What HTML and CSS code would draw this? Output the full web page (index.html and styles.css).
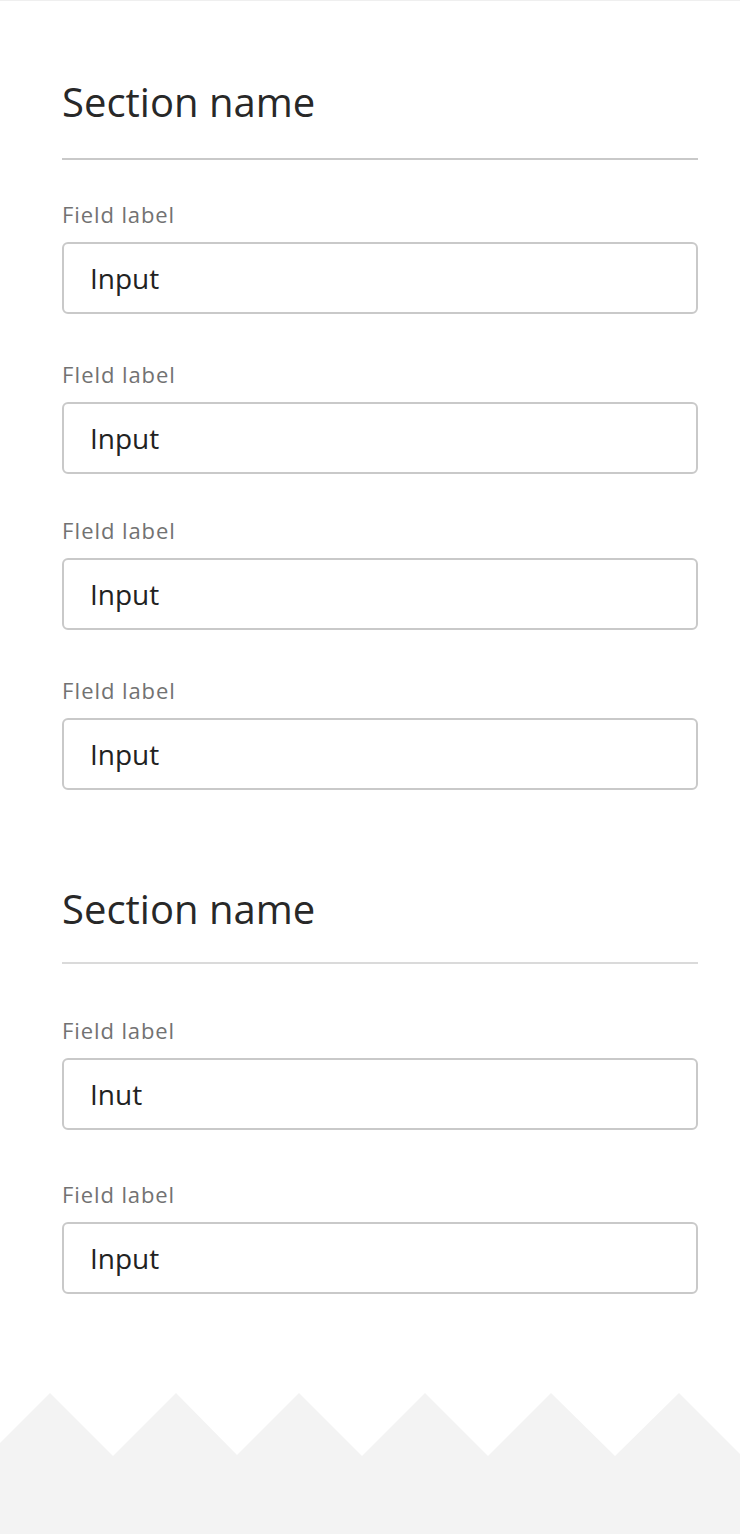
FILE: index.html
```html
<!DOCTYPE html>
<html lang="en">
<head>
<meta charset="utf-8">
<title>Form</title>
<link rel="stylesheet" href="styles.css">
</head>
<body>
<main class="form">
  <section class="section">
    <h2 class="section-title">Section name</h2>
    <div class="divider"></div>
    <div class="fields">
      <div class="field">
        <label class="field-label">Field label</label>
        <input class="input" type="text" value="Input">
      </div>
      <div class="field">
        <label class="field-label">FIeld label</label>
        <input class="input" type="text" value="Input">
      </div>
      <div class="field field--tight">
        <label class="field-label">FIeld label</label>
        <input class="input" type="text" value="Input">
      </div>
      <div class="field">
        <label class="field-label">FIeld label</label>
        <input class="input" type="text" value="Input">
      </div>
    </div>
  </section>
  <section class="section section--second">
    <h2 class="section-title">Section name</h2>
    <div class="divider divider--light"></div>
    <div class="fields fields--loose">
      <div class="field">
        <label class="field-label">Field label</label>
        <input class="input" type="text" value="Inut">
      </div>
      <div class="field">
        <label class="field-label">Field label</label>
        <input class="input" type="text" value="Input">
      </div>
    </div>
  </section>
</main>
<footer class="footer">
  <svg class="zigzag" width="740" height="141" viewBox="0 0 740 141" preserveAspectRatio="none">
    <polygon points="0,50 50,0 113,63 176,0 237,62 299,0 362,63 425,0 488,63 551,0 615,63 679,0 740,61 740,141 0,141" fill="#f3f3f3"/>
  </svg>
</footer>
</body>
</html>
```
FILE: styles.css
```css
html, body {
  margin: 0;
  padding: 0;
}

body {
  box-sizing: border-box;
  min-height: 1534px;
  display: flex;
  flex-direction: column;
  background: #ffffff;
  border-top: 1px solid #efefef;
  font-family: "Open Sans", "Noto Sans", sans-serif;
}

.form {
  padding: 77px 42px 0 62px;
}

.section--second {
  margin-top: 95px;
}

.section-title {
  margin: 0;
  font-size: 40px;
  line-height: 48px;
  font-weight: 400;
  color: #282828;
}

.divider {
  height: 2px;
  margin-top: 32px;
  background: #c9c9c9;
}

.divider--light {
  margin-top: 29px;
  background: #dadada;
}

.fields {
  display: flex;
  flex-direction: column;
  margin-top: 39px;
}

.fields--loose {
  margin-top: 51px;
}

.field {
  display: flex;
  flex-direction: column;
}

.field + .field {
  margin-top: 45px;
}

.field + .field--tight {
  margin-top: 41px;
}

.fields--loose .field + .field {
  margin-top: 49px;
}

.field-label {
  display: block;
  font-size: 22px;
  line-height: 30px;
  letter-spacing: 0.9px;
  color: #727272;
  margin-bottom: 13px;
}

.input {
  box-sizing: border-box;
  width: 100%;
  height: 72px;
  margin: 0;
  padding: 0 26px;
  border: 2px solid #c9c9c9;
  border-radius: 6px;
  background: #ffffff;
  font-family: "Open Sans", "Noto Sans", sans-serif;
  font-size: 28px;
  color: #222222;
  outline: none;
}

.footer {
  margin-top: auto;
}

.zigzag {
  display: block;
  width: 740px;
  height: 141px;
}
```
